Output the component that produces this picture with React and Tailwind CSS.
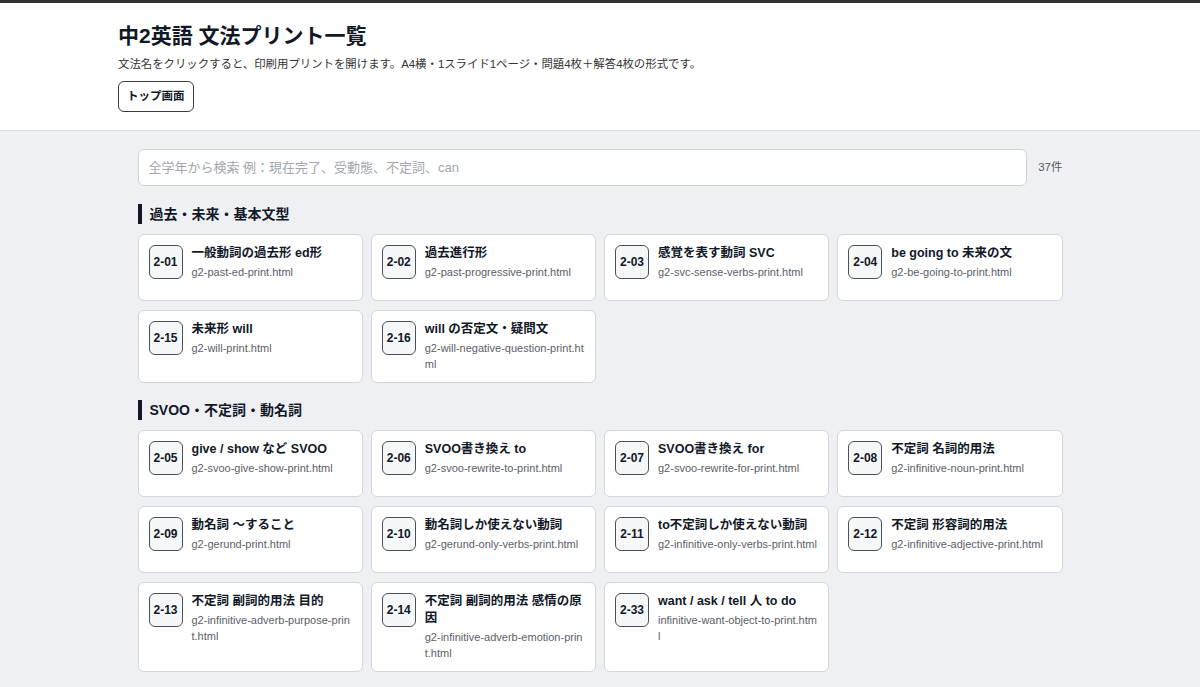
import React from 'react'

const sections = [
  {
    title: '過去・未来・基本文型',
    items: [
      ['2-01', '一般動詞の過去形 ed形', 'g2-past-ed-print.html'],
      ['2-02', '過去進行形', 'g2-past-progressive-print.html'],
      ['2-03', '感覚を表す動詞 SVC', 'g2-svc-sense-verbs-print.html'],
      ['2-04', 'be going to 未来の文', 'g2-be-going-to-print.html'],
      ['2-15', '未来形 will', 'g2-will-print.html'],
      ['2-16', 'will の否定文・疑問文', 'g2-will-negative-question-print.html'],
    ],
  },
  {
    title: 'SVOO・不定詞・動名詞',
    items: [
      ['2-05', 'give / show など SVOO', 'g2-svoo-give-show-print.html'],
      ['2-06', 'SVOO書き換え to', 'g2-svoo-rewrite-to-print.html'],
      ['2-07', 'SVOO書き換え for', 'g2-svoo-rewrite-for-print.html'],
      ['2-08', '不定詞 名詞的用法', 'g2-infinitive-noun-print.html'],
      ['2-09', '動名詞 〜すること', 'g2-gerund-print.html'],
      ['2-10', '動名詞しか使えない動詞', 'g2-gerund-only-verbs-print.html'],
      ['2-11', 'to不定詞しか使えない動詞', 'g2-infinitive-only-verbs-print.html'],
      ['2-12', '不定詞 形容詞的用法', 'g2-infinitive-adjective-print.html'],
      ['2-13', '不定詞 副詞的用法 目的', 'g2-infinitive-adverb-purpose-print.html'],
      ['2-14', '不定詞 副詞的用法 感情の原因', 'g2-infinitive-adverb-emotion-print.html'],
      ['2-33', 'want / ask / tell 人 to do', 'infinitive-want-object-to-print.html'],
    ],
  },
]

function Card({ code, name, file }) {
  return (
    <a className="flex items-start gap-[9px] min-h-[67px] bg-white border border-[#d4d6db] rounded-md p-[10px] cursor-pointer">
      <div className="w-[34px] h-[34px] shrink-0 flex items-center justify-center border border-[#4b4f56] rounded-md bg-[#f6f7f9] text-[12px] font-bold text-[#111827]">
        {code}
      </div>
      <div className="min-w-0 flex-1">
        <div className="text-[12.5px] leading-[17px] font-bold text-[#111827]">{name}</div>
        <div className="mt-[2px] text-[11px] leading-[16px] text-[#5b6068] break-all">{file}</div>
      </div>
    </a>
  )
}

export default function App() {
  return (
    <div
      className="min-h-screen bg-[#eff0f4]"
      style={{ fontFamily: '"Liberation Sans", "Noto Sans CJK JP", sans-serif' }}
    >
      <div className="h-[3px] bg-[#333333]" />
      <header className="bg-white border-b border-[#d9dbe0]">
        <div className="w-[964px] mx-auto pt-[19px] pb-[18px]">
          <h1 className="text-[21px] leading-[28px] font-bold text-[#111827]">中2英語 文法プリント一覧</h1>
          <p className="mt-[5px] text-[11.4px] leading-[18px] text-[#333]">
            文法名をクリックすると、印刷用プリントを開けます。A4横・1スライド1ページ・問題4枚＋解答4枚の形式です。
          </p>
          <button className="mt-[8px] h-[31px] px-[8px] border border-[#3a3d42] rounded-md bg-white text-[11.5px] font-bold text-[#111827]">
            トップ画面
          </button>
        </div>
      </header>

      <main className="w-[925px] mx-auto pt-[18px] pb-[20px]">
        <div className="flex items-center gap-[11px]">
          <input
            className="flex-1 h-[37px] px-[10px] bg-white border border-[#cfd2d8] rounded-md text-[13px] text-[#111827] placeholder:text-[#a2a6ad] outline-none"
            placeholder="全学年から検索 例：現在完了、受動態、不定詞、can"
          />
          <span className="text-[11.5px] text-[#555a61]">37件</span>
        </div>

        {sections.map((s, i) => (
          <section key={s.title} className={i === 0 ? 'mt-[18px]' : 'mt-[17px]'}>
            <h2 className="flex items-center gap-[8px] h-[20px] text-[14px] font-bold text-[#111827]">
              <span className="w-[4px] h-[20px] bg-[#111827]" />
              {s.title}
            </h2>
            <div className="mt-[10px] grid grid-cols-4 gap-x-[8px] gap-y-[9px]">
              {s.items.map(([code, name, file]) => (
                <Card key={code} code={code} name={name} file={file} />
              ))}
            </div>
          </section>
        ))}
      </main>
    </div>
  )
}
